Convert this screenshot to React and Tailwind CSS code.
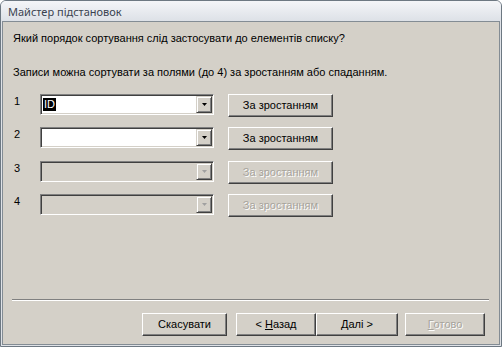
const FONT = { fontFamily: '"Liberation Sans", Arial, sans-serif' };

function Arrow({ disabled }) {
  return (
    <svg width="5" height="3" viewBox="0 0 5 3">
      <path d="M0 0h5L2.5 3z" fill={disabled ? "#a0a0a0" : "#000"} />
    </svg>
  );
}

function Combo({ value, disabled }) {
  return (
    <div
      className={`flex h-[21px] w-[174px] border border-t-[#808080] border-l-[#808080] border-b-white border-r-white p-[1px] shadow-[inset_1px_1px_0_#404040,inset_-1px_-1px_0_#d4d0c8] ${
        disabled ? "bg-[#d4d0c8]" : "bg-white"
      }`}
    >
      <div className="flex flex-1 items-center pl-[1px]">
        {value && <span className="bg-black px-[1px] leading-[13px] text-white">{value}</span>}
      </div>
      <div className="flex w-[16px] items-center justify-center border border-t-[#d4d0c8] border-l-[#d4d0c8] border-b-[#404040] border-r-[#404040] bg-[#d4d0c8] shadow-[inset_1px_1px_0_white,inset_-1px_-1px_0_#808080]">
        <Arrow disabled={disabled} />
      </div>
    </div>
  );
}

function Btn({ children, disabled, className = "" }) {
  return (
    <div
      className={`flex h-[23px] items-center justify-center border border-t-white border-l-white border-b-[#404040] border-r-[#404040] bg-[#d4d0c8] shadow-[inset_-1px_-1px_0_#808080] ${
        disabled ? "text-[#a7a49c] [text-shadow:1px_1px_0_#fff]" : "text-black"
      } ${className}`}
    >
      {children}
    </div>
  );
}

const rows = [
  { n: "1", value: "ID", h: "h-[33px]" },
  { n: "2", value: "", h: "h-[34px]" },
  { n: "3", disabled: true, h: "h-[33px]" },
  { n: "4", disabled: true, h: "h-[33px]" },
];

export default function App() {
  return (
    <div
      className="flex h-[347px] w-[502px] flex-col rounded-t-[6px] border border-[#6d7882] bg-[#dfe2e7] text-[11px] leading-[13px] text-black"
      style={FONT}
    >
      <div className="flex h-[20px] items-center rounded-t-[5px] bg-gradient-to-b from-[#f4f5f8] to-[#dde1e7] pl-[7px]">
        <span className="text-[11px] text-[#3b4350]" style={{ fontFamily: '"Noto Sans", "Open Sans", sans-serif' }}>
          Майстер підстановок
        </span>
      </div>
      <div className="mx-[1px] mb-[1px] flex flex-1 flex-col border border-[#838c94] bg-[#d4d0c8]">
        <p className="pl-[10px] pt-[10px]">Який порядок сортування слід застосувати до елементів списку?</p>
        <p className="mt-[21px] pl-[10px]">Записи можна сортувати за полями (до 4) за зростанням або спаданням.</p>
        <div className="mt-[15px] flex flex-col pl-[11px]">
          {rows.map((r) => (
            <div key={r.n} className={`flex items-start ${r.h}`}>
              <span className="mt-[1px] w-[26px]">{r.n}</span>
              <Combo value={r.value} disabled={r.disabled} />
              <Btn disabled={r.disabled} className="ml-[14px] w-[105px]">
                За зростанням
              </Btn>
            </div>
          ))}
        </div>
        <div className="ml-[9px] mr-[10px] mt-auto h-[2px] border-t border-t-[#808080] border-b border-b-white" />
        <div className="mt-[12px] flex justify-end pb-[8px] pr-[14px]">
          <Btn className="w-[85px]">Скасувати</Btn>
          <Btn className="ml-[9px] w-[80px]">
            &lt; <span className="ml-[3px] underline">Н</span>азад
          </Btn>
          <Btn className="w-[82px]">
            <span className="underline">Д</span>алі &gt;
          </Btn>
          <Btn disabled className="ml-[7px] w-[80px]">
            <span className="underline">Г</span>отово
          </Btn>
        </div>
      </div>
    </div>
  );
}
